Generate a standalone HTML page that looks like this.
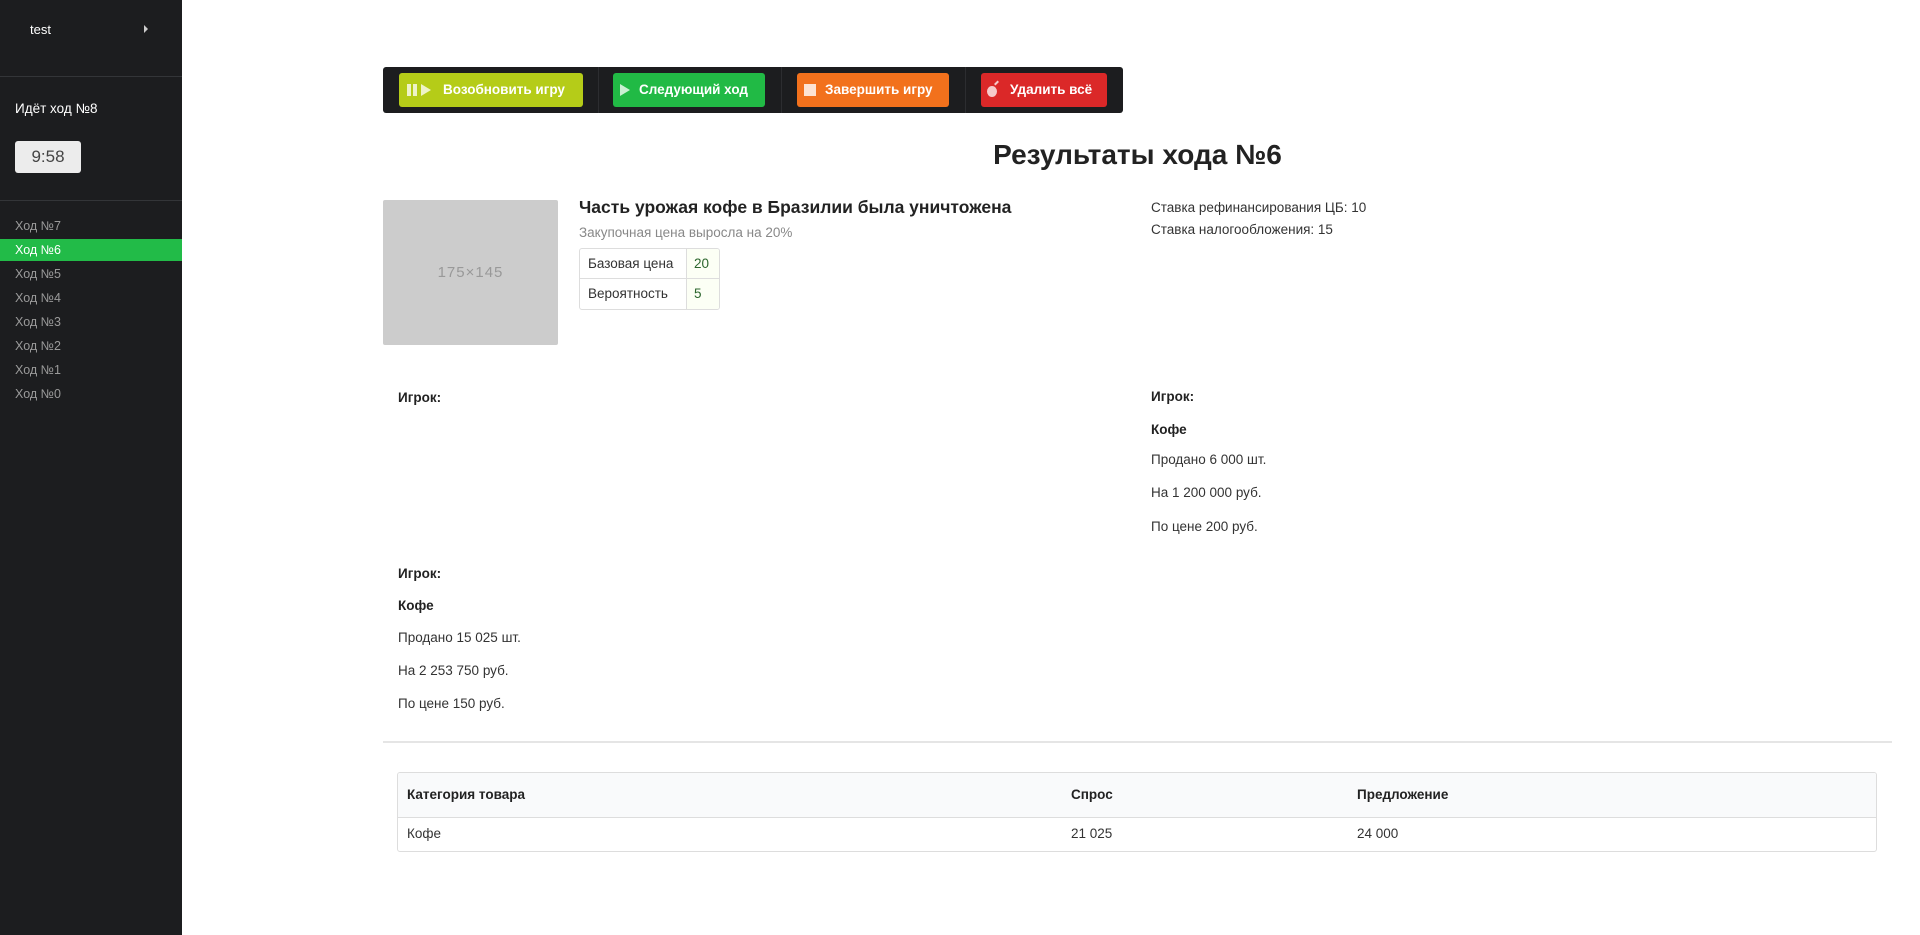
<!DOCTYPE html>
<html><head><meta charset="utf-8"><style>
*{box-sizing:border-box;margin:0;padding:0}
body{width:1920px;height:935px;background:#fff;font-family:"Liberation Sans",sans-serif;color:#333;position:relative;overflow:hidden}
.sb{position:absolute;left:0;top:0;width:182px;height:935px;background:#1c1d1f}
.a{position:absolute}
.sb .hr{position:absolute;left:0;width:182px;height:1px;background:#333538}
.it{position:absolute;left:0;width:182px;height:22px;line-height:22px;padding-left:15px;font-size:12.5px;color:#9a9a9a}
.it.on{background:#22bb48;color:#fff}
.tb{position:absolute;left:383px;top:67px;width:740px;height:46px;background:#1c1d1f;border-radius:3px}
.btn{position:absolute;top:6px;height:34px;border-radius:3px;color:#fff;font-weight:bold;font-size:13.5px;line-height:34px;white-space:nowrap}
.sep{position:absolute;top:0;width:1px;height:46px;background:#2c2d30}
.t{position:absolute;white-space:nowrap}
</style></head><body>
<div class="sb">
<div class="t" style="left:30px;top:22px;font-size:13px;color:#fff">test</div>
<div class="a" style="left:144px;top:25px;width:0;height:0;border-left:4px solid #ccc;border-top:4px solid transparent;border-bottom:4px solid transparent"></div>
<div class="hr" style="top:76px"></div>
<div class="t" style="left:15px;top:101px;font-size:13.5px;color:#fff">Идёт ход №8</div>
<div class="a" style="left:15px;top:141px;width:66px;height:32px;background:#ececec;border-radius:3px;text-align:center;line-height:32px;font-size:17px;color:#444">9:58</div>
<div class="hr" style="top:200px"></div>
<div class="it" style="top:215px">Ход №7</div>
<div class="it on" style="top:239px">Ход №6</div>
<div class="it" style="top:263px">Ход №5</div>
<div class="it" style="top:287px">Ход №4</div>
<div class="it" style="top:311px">Ход №3</div>
<div class="it" style="top:335px">Ход №2</div>
<div class="it" style="top:359px">Ход №1</div>
<div class="it" style="top:383px">Ход №0</div>
</div>

<div class="tb">
<div class="btn" style="left:16px;width:184px;background:#b5cc18">
 <span class="a" style="left:8px;top:11px;width:4px;height:12px;background:#eef3c8"></span>
 <span class="a" style="left:14px;top:11px;width:4px;height:12px;background:#eef3c8"></span>
 <span class="a" style="left:22px;top:11px;border-left:10px solid #eef3c8;border-top:6px solid transparent;border-bottom:6px solid transparent"></span>
 <span class="a" style="left:44px">Возобновить игру</span></div>
<div class="sep" style="left:215px"></div>
<div class="btn" style="left:230px;width:152px;background:#21ba45">
 <span class="a" style="left:7px;top:11px;border-left:10px solid #c9f0d2;border-top:6px solid transparent;border-bottom:6px solid transparent"></span>
 <span class="a" style="left:26px">Следующий ход</span></div>
<div class="sep" style="left:398px"></div>
<div class="btn" style="left:414px;width:152px;background:#f2711c">
 <span class="a" style="left:7px;top:11px;width:12px;height:12px;background:#fde3d2"></span>
 <span class="a" style="left:28px">Завершить игру</span></div>
<div class="sep" style="left:582px"></div>
<div class="btn" style="left:598px;width:126px;background:#db2828">
 <span class="a" style="left:6px;top:13px;width:10px;height:11px;border-radius:50%;background:#f6caca"></span>
 <span class="a" style="left:13px;top:9px;width:5px;height:2px;background:#f6caca;transform:rotate(-45deg)"></span>
 <span class="a" style="left:29px">Удалить всё</span></div>
</div>

<div class="t" style="left:383px;width:1509px;text-align:center;top:139px;font-size:28px;font-weight:bold;color:#222">Результаты хода №6</div>

<div class="a" style="left:383px;top:200px;width:175px;height:145px;background:#ccc;border-radius:2px;text-align:center;line-height:145px;font-size:15px;color:#999;letter-spacing:1px">175×145</div>
<div class="t" style="left:579px;top:197px;font-size:17.5px;font-weight:bold;color:#222">Часть урожая кофе в Бразилии была уничтожена</div>
<div class="t" style="left:579px;top:225px;font-size:13.5px;color:#888">Закупочная цена выросла на 20%</div>
<div class="a" style="left:579px;top:248px;width:141px;height:62px;border:1px solid #ddd;border-radius:3px;font-size:13.5px;overflow:hidden">
 <div class="a" style="left:0;top:0;width:107px;height:30px;border-bottom:1px solid #ddd;border-right:1px solid #ddd;line-height:30px;padding-left:8px">Базовая цена</div>
 <div class="a" style="left:107px;top:0;width:34px;height:30px;border-bottom:1px solid #ddd;background:#fcfff5;color:#2c662d;line-height:30px;padding-left:7px">20</div>
 <div class="a" style="left:0;top:30px;width:107px;height:30px;border-right:1px solid #ddd;line-height:30px;padding-left:8px">Вероятность</div>
 <div class="a" style="left:107px;top:30px;width:34px;height:30px;background:#fcfff5;color:#2c662d;line-height:30px;padding-left:7px">5</div>
</div>
<div class="t" style="left:1151px;top:200px;font-size:13.5px">Ставка рефинансирования ЦБ: 10</div>
<div class="t" style="left:1151px;top:222px;font-size:13.5px">Ставка налогообложения: 15</div>

<div style="font-size:13.5px">
<div class="t" style="left:398px;top:390px;font-weight:bold;color:#222">Игрок:</div>
<div class="t" style="left:1151px;top:389px;font-weight:bold;color:#222">Игрок:</div>
<div class="t" style="left:1151px;top:422px;font-weight:bold;color:#222">Кофе</div>
<div class="t" style="left:1151px;top:452px">Продано 6 000 шт.</div>
<div class="t" style="left:1151px;top:485px">На 1 200 000 руб.</div>
<div class="t" style="left:1151px;top:519px">По цене 200 руб.</div>
<div class="t" style="left:398px;top:566px;font-weight:bold;color:#222">Игрок:</div>
<div class="t" style="left:398px;top:598px;font-weight:bold;color:#222">Кофе</div>
<div class="t" style="left:398px;top:630px">Продано 15 025 шт.</div>
<div class="t" style="left:398px;top:663px">На 2 253 750 руб.</div>
<div class="t" style="left:398px;top:696px">По цене 150 руб.</div>
</div>

<div class="a" style="left:383px;top:741px;width:1509px;height:2px;background:#e5e5e5"></div>

<div class="a" style="left:397px;top:772px;width:1480px;height:80px;border:1px solid #ddd;border-radius:3px;font-size:13.5px;overflow:hidden">
 <div class="a" style="left:0;top:0;width:100%;height:45px;background:#f9fafb;border-bottom:1px solid #ddd"></div>
 <div class="t" style="left:9px;top:14px;font-weight:bold;color:#222">Категория товара</div>
 <div class="t" style="left:673px;top:14px;font-weight:bold;color:#222">Спрос</div>
 <div class="t" style="left:959px;top:14px;font-weight:bold;color:#222">Предложение</div>
 <div class="t" style="left:9px;top:53px">Кофе</div>
 <div class="t" style="left:673px;top:53px">21 025</div>
 <div class="t" style="left:959px;top:53px">24 000</div>
</div>
</body></html>
